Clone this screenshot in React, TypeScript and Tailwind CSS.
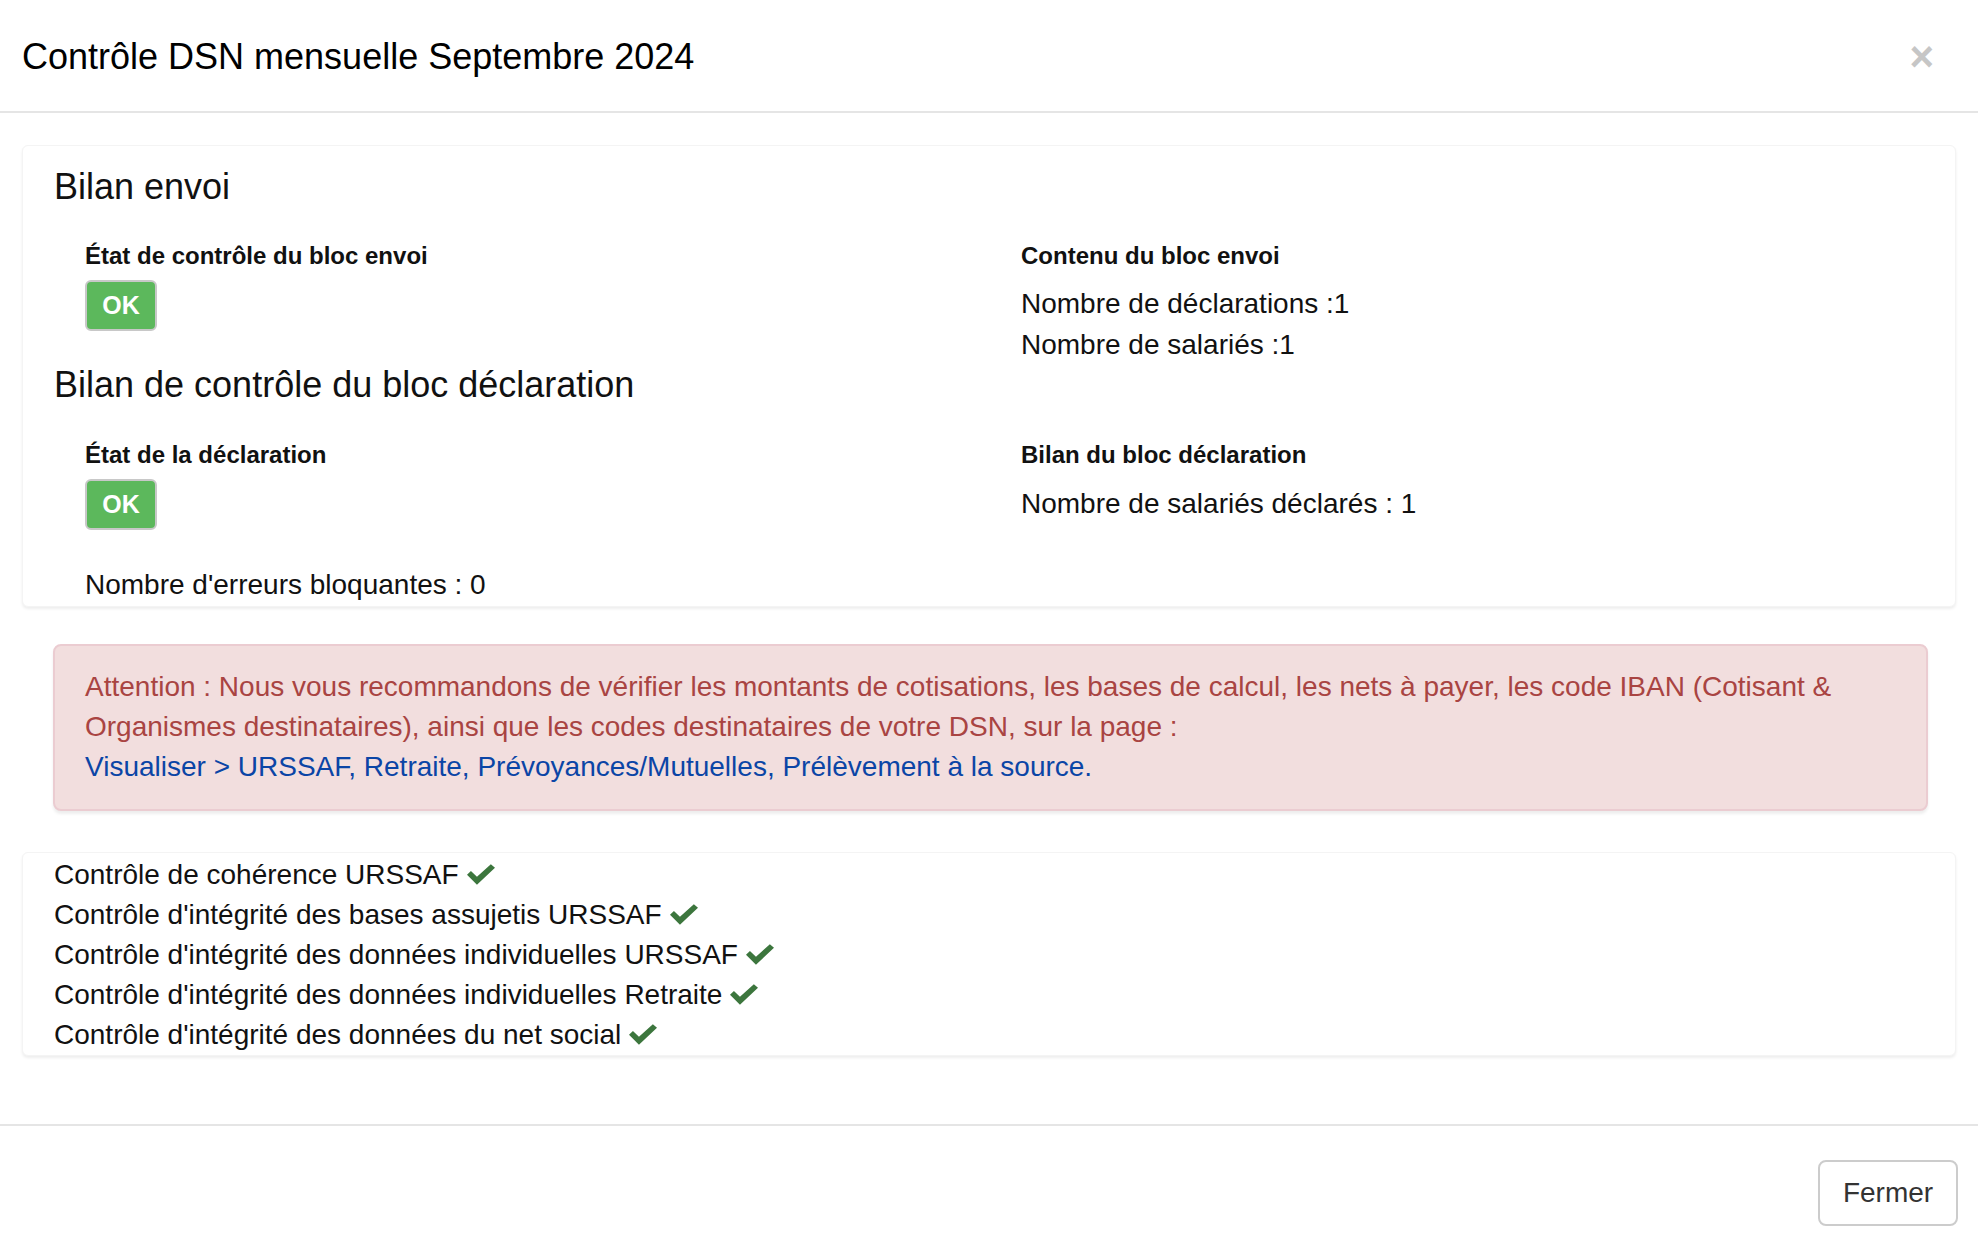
const checks = [
  'Contrôle de cohérence URSSAF',
  "Contrôle d'intégrité des bases assujetis URSSAF",
  "Contrôle d'intégrité des données individuelles URSSAF",
  "Contrôle d'intégrité des données individuelles Retraite",
  "Contrôle d'intégrité des données du net social",
];

function CheckIcon() {
  return (
    <svg
      className="ml-[8px] inline-block h-[21px] w-[28px] align-[-1px]"
      viewBox="0 0 27 20"
    >
      <path d="M0 10.3 L3.8 6.6 L9.6 12.2 L23 0 L27 3.6 L9.6 19.8 Z" fill="#3c763d" />
    </svg>
  );
}

function OkBadge() {
  return (
    <div className="mt-[7px] flex h-[51px] w-[72px] items-center justify-center rounded-[6px] border-2 border-[#c8c8c8] bg-[#5cb85c] text-[25px] font-bold leading-none text-white">
      OK
    </div>
  );
}

export default function App() {
  return (
    <div className="min-h-[1254px] w-[1978px] bg-white font-['Liberation_Sans',Arial,sans-serif] text-[#111]">
      <header className="flex h-[113px] items-center justify-between border-b-2 border-[#e5e5e5] pl-[22px] pr-[44px] pt-[2px]">
        <h1 className="text-[36px] leading-[51px] text-black">
          Contrôle DSN mensuelle Septembre 2024
        </h1>
        <button className="text-[42px] font-bold leading-none text-[#c6c6c6]" type="button">
          ×
        </button>
      </header>

      <main className="px-[22px] pb-[68px] pt-[32px]">
        <section className="rounded-[6px] border border-[#f4f4f4] bg-white pb-[1px] pt-[21px] shadow-[0_2px_3px_rgba(0,0,0,0.07)]">
          <h2 className="pl-[31px] text-[36px] leading-[40px]">Bilan envoi</h2>
          <div className="mt-[32px] grid grid-cols-[968px_1fr]">
            <div className="pl-[62px]">
              <p className="text-[24px] font-bold leading-[34px]">
                État de contrôle du bloc envoi
              </p>
              <OkBadge />
            </div>
            <div className="pl-[30px]">
              <p className="text-[24px] font-bold leading-[34px]">
                Contenu du bloc envoi
              </p>
              <p className="mt-[11px] text-[28px] leading-[40px]">
                Nombre de déclarations :1
              </p>
              <p className="mt-[1px] text-[28px] leading-[40px]">
                Nombre de salariés :1
              </p>
            </div>
          </div>
          <h2 className="pl-[31px] text-[36px] leading-[40px]">
            Bilan de contrôle du bloc déclaration
          </h2>
          <div className="mt-[33px] grid grid-cols-[968px_1fr]">
            <div className="pl-[62px]">
              <p className="text-[24px] font-bold leading-[34px]">
                État de la déclaration
              </p>
              <OkBadge />
              <p className="mt-[35px] text-[28px] leading-[40px]">
                Nombre d'erreurs bloquantes : 0
              </p>
            </div>
            <div className="pl-[30px]">
              <p className="text-[24px] font-bold leading-[34px]">
                Bilan du bloc déclaration
              </p>
              <p className="mt-[12px] text-[28px] leading-[40px]">
                Nombre de salariés déclarés : 1
              </p>
            </div>
          </div>
        </section>

        <div className="ml-[31px] mr-[28px] mt-[37px] rounded-[8px] border-2 border-[#ebccd1] bg-[#f2dede] px-[30px] pb-[22px] pt-[21px] text-[28px] leading-[40px] text-[#a94442] shadow-[0_3px_3px_rgba(0,0,0,0.07)]">
          <p>
            Attention : Nous vous recommandons de vérifier les montants de
            cotisations, les bases de calcul, les nets à payer, les code IBAN
            (Cotisant &amp; Organismes destinataires), ainsi que les codes
            destinataires de votre DSN, sur la page :
          </p>
          <a className="block text-[#0b45a6]" href="#">
            Visualiser &gt; URSSAF, Retraite, Prévoyances/Mutuelles,
            Prélèvement à la source.
          </a>
        </div>

        <section className="mt-[41px] rounded-[6px] border border-[#f4f4f4] bg-white pb-0 pl-[31px] pt-[2px] shadow-[0_2px_3px_rgba(0,0,0,0.07)]">
          {checks.map((label) => (
            <p className="text-[28px] leading-[40px]" key={label}>
              {label}
              <CheckIcon />
            </p>
          ))}
        </section>
      </main>

      <footer className="flex justify-end border-t-2 border-[#e5e5e5] pr-[20px] pt-[34px]">
        <button
          className="h-[66px] w-[140px] rounded-[8px] border-2 border-[#cccccc] bg-white text-[28px] text-[#333]"
          type="button"
        >
          Fermer
        </button>
      </footer>
    </div>
  );
}
